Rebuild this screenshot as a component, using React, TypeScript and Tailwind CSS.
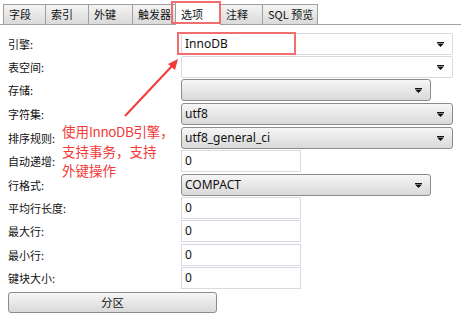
import React from 'react';

const tabs = [
  { label: '字段', w: 'w-[43px]' },
  { label: '索引', w: 'w-[44px]' },
  { label: '外键', w: 'w-[45px]' },
  { label: '触发器', w: 'w-[44px]' },
  { label: '选项', w: 'w-[46px]', active: true },
  { label: '注释', w: 'w-[43px]' },
  { label: 'SQL 预览', w: 'w-[56px]' },
];

type Row = {
  label: string;
  h: string;
  kind: 'combo' | 'select' | 'selectShort' | 'input';
  value?: string;
};

const rows: Row[] = [
  { label: '引擎:', h: 'h-[23px]', kind: 'combo', value: 'InnoDB' },
  { label: '表空间:', h: 'h-[23px]', kind: 'combo' },
  { label: '存储:', h: 'h-[24px]', kind: 'selectShort' },
  { label: '字符集:', h: 'h-[24px]', kind: 'select', value: 'utf8' },
  { label: '排序规则:', h: 'h-[23px]', kind: 'select', value: 'utf8_general_ci' },
  { label: '自动递增:', h: 'h-[24px]', kind: 'input', value: '0' },
  { label: '行格式:', h: 'h-[23px]', kind: 'selectShort', value: 'COMPACT' },
  { label: '平均行长度:', h: 'h-[23px]', kind: 'input', value: '0' },
  { label: '最大行:', h: 'h-[24px]', kind: 'input', value: '0' },
  { label: '最小行:', h: 'h-[23px]', kind: 'input', value: '0' },
  { label: '键块大小:', h: 'h-[22px]', kind: 'input', value: '0' },
];

function Caret() {
  return (
    <svg width="7" height="5" viewBox="0 0 7 5" className="shrink-0">
      <rect x="0" y="0" width="7" height="1" fill="#111" />
      <path d="M0 1.5 H7 L3.5 5 Z" fill="#111" />
    </svg>
  );
}

function Control({ row }: { row: Row }) {
  if (row.kind === 'input') {
    return (
      <div className="w-[120px] h-[22px] border border-[#d6dbe3] bg-white flex items-center px-[3px] text-[12px] text-[#111]">
        {row.value}
      </div>
    );
  }
  if (row.kind === 'combo') {
    return (
      <div className="w-[272px] h-[22px] border border-[#d6dbe3] rounded-[2px] bg-white flex items-center justify-between pl-[3px] pr-[8px] text-[12px] text-[#111]">
        <span>{row.value}</span>
        <Caret />
      </div>
    );
  }
  const w = row.kind === 'selectShort' ? 'w-[250px]' : 'w-[272px]';
  return (
    <div
      className={`${w} h-[22px] border border-[#8c8c8c] rounded-[3px] bg-gradient-to-b from-[#f6f6f6] to-[#d9d9d9] flex items-center justify-between pl-[3px] pr-[8px] text-[12px] text-[#111]`}
    >
      <span>{row.value}</span>
      <Caret />
    </div>
  );
}

export default function App() {
  return (
    <div className="w-[461px] h-[325px] bg-white relative overflow-hidden font-['Noto_Sans','Noto_Sans_CJK_SC',sans-serif]">
      {/* Tabs */}
      <div className="flex items-end h-[25px] pl-[3px] border-b border-[#a0a0a0]">
        {tabs.map((t, i) =>
          t.active ? (
            <div
              key={t.label}
              className={`${t.w} h-[23px] -mb-px ${i > 0 ? '-ml-px' : ''} relative z-10 bg-white border border-b-0 border-[#a0a0a0] flex items-start pt-[3px] pl-[5px] text-[11px] text-[#111] font-['Noto_Sans_CJK_SC',sans-serif]`}
            >
              {t.label}
            </div>
          ) : (
            <div
              key={t.label}
              className={`${t.w} h-[20px] ${i > 0 ? '-ml-px' : ''} bg-gradient-to-b from-[#f4f4f4] to-[#dadada] border border-b-0 border-[#a0a0a0] flex items-center pl-[5px] text-[11px] text-[#111] font-['Noto_Sans_CJK_SC',sans-serif]`}
            >
              {t.label}
            </div>
          )
        )}
      </div>

      {/* Options form */}
      <div className="pl-[8px] pt-[8px] flex flex-col">
        {rows.map((r) => (
          <div key={r.label} className={`${r.h} flex items-start`}>
            <div className="w-[173px] h-[22px] flex items-center text-[11px] text-[#111] font-['Noto_Sans_CJK_SC',sans-serif]">
              {r.label}
            </div>
            <Control row={r} />
          </div>
        ))}
        <button className="mt-[3px] w-[209px] h-[21px] border border-[#8c8c8c] rounded-[3px] bg-gradient-to-b from-[#f6f6f6] to-[#d9d9d9] text-[11.5px] text-[#111] font-['Noto_Sans_CJK_SC',sans-serif] flex items-center justify-center">
          分区
        </button>
      </div>

      {/* Annotations */}
      <div className="absolute left-[171px] top-[1px] w-[50px] h-[23px] border-2 border-[#f26d6d] z-20" />
      <div className="absolute left-[177px] top-[32px] w-[119px] h-[23px] border-2 border-[#f26d6d]" />
      <svg className="absolute left-0 top-0" width="461" height="325">
        <line x1="125" y1="116" x2="172" y2="66" stroke="#f23a3a" strokeWidth="2" />
        <path d="M178 59 L168 64 L175 70 Z" fill="#f23a3a" />
      </svg>
      <div className="absolute left-[62px] top-[122px] text-[13.5px] leading-[19.5px] text-[#f23a3a] font-['Noto_Sans_CJK_SC',sans-serif]">
        <div>
          使用<span className="tracking-[-0.4px]">InnoDB</span>引擎，
        </div>
        <div>支持事务，支持</div>
        <div>外键操作</div>
      </div>
    </div>
  );
}
